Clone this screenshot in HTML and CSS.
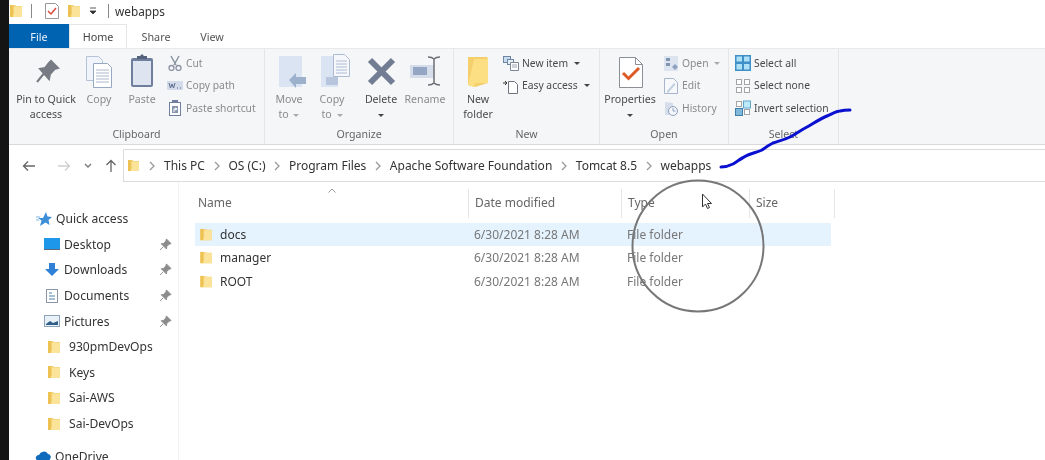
FILE: index.html
```html
<!DOCTYPE html>
<html lang="en">
<head>
<meta charset="utf-8">
<title>webapps</title>
<link rel="stylesheet" href="styles.css">
</head>
<body>
<svg class="defs" width="0" height="0" aria-hidden="true">
  <symbol id="folder" viewBox="0 0 12 16">
    <path d="M0 2h5l1 1h6v11H0z" fill="#f2cf6f"/>
    <path d="M4 3.5h8V14H2l2-3z" fill="#fbe39a"/>
    <path d="M0 2h3v12H0z" fill="#edc253"/>
  </symbol>
  <symbol id="pin" viewBox="0 0 14 14">
    <path d="M8 1l5 5-2 .6-2.6 2.6-.4 2.6L2.400 6.200 5 5.800 7.400 3.200zM4.500 9.500L1 13" fill="#8c8c8c" stroke="#8c8c8c"/>
  </symbol>
  <symbol id="chev" viewBox="0 0 6 10">
    <path d="M1 1l4 4-4 4" fill="none" stroke="#9a9a9a" stroke-width="1.300"/>
  </symbol>
</svg>
<div class="app">
  <div class="edge"></div>
  <div class="window">
    <header class="titlebar">
      <svg class="tb-folder"><use href="#folder"/></svg>
      <span class="tb-sep"></span>
      <svg class="tb-check" viewBox="0 0 14 16"><path d="M.500.500h10l3 3v12H.500z" fill="#fff" stroke="#999"/><path d="M3 8l3 3 5-6" fill="none" stroke="#d9483b" stroke-width="1.500"/></svg>
      <svg class="tb-folder2"><use href="#folder"/></svg>
      <svg class="tb-caret" viewBox="0 0 8 8"><path d="M1 1h6M1 4h6l-3 3z" fill="#333" stroke="#333" stroke-width=".8"/></svg>
      <span class="tb-sep tb-sep2"></span>
      <span class="tb-title">webapps</span>
    </header>
    <nav class="tabs">
      <span class="tab tab-file">File</span>
      <span class="tab tab-home">Home</span>
      <span class="tab tab-share">Share</span>
      <span class="tab tab-view">View</span>
    </nav>
    <section class="ribbon">
      <div class="group g-clip">
        <div class="cells">
          <div class="big on">
            <svg class="ico" viewBox="0 0 36 36"><path d="M23 8l7 7-3.500 1-4.500 5-1 5L12 16l5-1 4-5zM15.500 21L9 29" fill="#777b84" stroke="#777b84" stroke-width="2"/></svg>
            <span>Pin to Quick<br>access</span>
          </div>
          <div class="big">
            <svg class="ico" viewBox="0 0 36 36"><path d="M5.500 3.500h12l4 4v20h-16z" fill="#f1f4fa" stroke="#b5c3d9"/><path d="M12.500 10.500h14l4 4v20h-18z" fill="#fff" stroke="#97a8c3"/><path d="M15 17h13M15 20h13M15 23h13M15 26h13M15 29h13" stroke="#aab8cd"/></svg>
            <span>Copy</span>
          </div>
          <div class="big">
            <svg class="ico" viewBox="0 0 36 36"><rect x="7" y="5" width="22" height="29" rx="2" fill="#6f7f9d"/><rect x="9" y="8" width="18" height="24" fill="#dfe5f0"/><path d="M13 6h10V3h-3l-2-2-2 2h-3z" fill="#54627c"/></svg>
            <span>Paste</span>
          </div>
          <div class="smalls">
            <div class="small"><svg viewBox="0 0 16 16"><path d="M4 1l5 9M12 1l-5 9" stroke="#8b93a3" stroke-width="1.500" fill="none"/><circle cx="4.500" cy="13" r="2.500" fill="none" stroke="#8b93a3" stroke-width="1.300"/><circle cx="11.500" cy="13" r="2.500" fill="none" stroke="#8b93a3" stroke-width="1.300"/></svg><span>Cut</span></div>
            <div class="small"><svg viewBox="0 0 16 16"><rect y="3" width="16" height="9" fill="#d4dcec"/><path d="M2 5l1.500 5L5 6l1.500 4L8 5M10 10h1M13 10h1" fill="none" stroke="#58698a"/></svg><span>Copy path</span></div>
            <div class="small"><svg viewBox="0 0 16 16"><rect x="2.500" y="2.500" width="11" height="13" fill="#fff" stroke="#6f7f9d"/><rect x="5" y="0" width="6" height="3" fill="#6f7f9d"/><path d="M5 6h6v7H5z" fill="#8896ae"/><path d="M7 12V9h3M8 8l2 1-2 1" fill="none" stroke="#fff"/></svg><span>Paste shortcut</span></div>
          </div>
        </div>
        <div class="glabel">Clipboard</div>
      </div>
      <div class="group g-org">
        <div class="cells">
          <div class="big">
            <svg class="ico" viewBox="0 0 36 36"><rect x="8" y="3" width="23" height="31" fill="#dbe4f2"/><path d="M18 27l7-7v4h10v7H25v4z" fill="#9db0cc"/></svg>
            <span>Move<br>to <i class="car"></i></span>
          </div>
          <div class="big">
            <svg class="ico" viewBox="0 0 36 36"><rect x="7" y="3" width="17" height="31" fill="#dbe4f2"/><path d="M19.500 1.500h11l5 5v17h-16z" fill="#f5f7fb" stroke="#aebcd3"/><path d="M22 8h11M22 11h11M22 14h11M22 17h11M22 20h11" stroke="#aebcd3"/><rect x="12" y="24" width="12" height="8" fill="#b7c6dc"/></svg>
            <span>Copy<br>to <i class="car"></i></span>
          </div>
          <div class="big on">
            <svg class="ico" viewBox="0 0 36 36"><path d="M7 7l23 23M30 7L7 30" stroke="#727c92" stroke-width="6"/></svg>
            <span>Delete<br><i class="car dark"></i></span>
          </div>
          <div class="big">
            <svg class="ico" viewBox="0 0 36 36"><rect x="3" y="12" width="24" height="13" fill="#d5ddeb"/><rect x="6" y="14" width="14" height="8" fill="#94a6c4"/><path d="M21 4c3 0 5 1 6 2 1-1 3-2 6-2M27 6v24M21 32c3 0 5-1 6-2 1 1 3 2 6 2" fill="none" stroke="#6c6f76" stroke-width="1.500"/></svg>
            <span>Rename</span>
          </div>
        </div>
        <div class="glabel">Organize</div>
      </div>
      <div class="group g-new">
        <div class="cells">
          <div class="big on">
            <svg class="ico" viewBox="0 0 36 36"><path d="M8 4h19l1 2v24l-13 4-7-2z" fill="#f4cf6b"/><path d="M14 6h14v24H15l-1 4-6-2z" fill="#fcdf83"/></svg>
            <span>New<br>folder</span>
          </div>
          <div class="smalls">
            <div class="small on"><svg viewBox="0 0 16 16"><rect x=".5" y="1.500" width="7" height="6" fill="#c9dcef" stroke="#6d86a4"/><rect x="4.500" y="4.500" width="6" height="5" fill="#e6eef7" stroke="#6d86a4"/><path d="M7.500 7.500h8v8h-8z" fill="#fff" stroke="#7d8694"/><path d="M9 10h5M9 12h5" stroke="#9aa3b2"/></svg><span>New item</span><i class="car dark"></i></div>
            <div class="small on"><svg viewBox="0 0 16 16"><path d="M5.500 3.500h6l3 3v9h-9z" fill="#fff" stroke="#6e7280"/><path d="M0 5h4M2 3l2 2-2 2" fill="none" stroke="#333"/></svg><span>Easy access</span><i class="car dark"></i></div>
          </div>
        </div>
        <div class="glabel">New</div>
      </div>
      <div class="group g-open">
        <div class="cells">
          <div class="big on">
            <svg class="ico" viewBox="0 0 36 36"><path d="M7.500 4.500h16l7 7v23h-23z" fill="#fff" stroke="#8c8f96"/><path d="M23.500 4.500v7h7" fill="none" stroke="#8c8f96"/><path d="M11 20l5.500 5.500L27 15" fill="none" stroke="#dd5a27" stroke-width="3"/></svg>
            <span>Properties<br><i class="car dark"></i></span>
          </div>
          <div class="smalls">
            <div class="small"><svg viewBox="0 0 16 16"><rect x="1" y="1" width="14" height="15" fill="#dce4f0"/><rect x="3" y="3" width="4" height="3" fill="#7f93b3"/><rect x="3" y="8" width="4" height="3" fill="#7f93b3"/><path d="M9 12l3-3 3 3-3 3z" fill="#8da0bd"/></svg><span>Open</span><i class="car"></i></div>
            <div class="small"><svg viewBox="0 0 16 16"><path d="M1.500 .5h9l4 4v11h-13z" fill="#f6f8fb" stroke="#a7b5ca"/><path d="M4 13l7-8 1.500 1.500-7 8H4z" fill="#c2cfe0"/></svg><span>Edit</span></div>
            <div class="small"><svg viewBox="0 0 16 16"><path d="M2 2l8 1v12H2z" fill="#d6ddea"/><circle cx="10" cy="11" r="4.500" fill="#f4f6fa" stroke="#8da0bd"/><path d="M10 8v3h2.500" fill="none" stroke="#8da0bd"/></svg><span>History</span></div>
          </div>
        </div>
        <div class="glabel">Open</div>
      </div>
      <div class="group g-sel">
        <div class="cells">
          <div class="smalls">
            <div class="small on"><svg viewBox="0 0 16 16"><rect width="16" height="16" fill="#3f8fc9"/><rect x="1.500" y="1.500" width="5.500" height="5" fill="#aee0f7"/><rect x="9" y="1.500" width="5.500" height="5" fill="#aee0f7"/><rect x="1.500" y="9" width="5.500" height="5.500" fill="#aee0f7"/><rect x="9" y="9" width="5.500" height="5.500" fill="#aee0f7"/></svg><span>Select all</span></div>
            <div class="small on"><svg viewBox="0 0 16 16"><g fill="#fff" stroke="#a5a5a5"><rect x="1.500" y="1.500" width="5" height="5"/><rect x="9.500" y="1.500" width="5" height="5"/><rect x="1.500" y="9.500" width="5" height="5"/><rect x="9.500" y="9.500" width="5" height="5"/></g></svg><span>Select none</span></div>
            <div class="small on"><svg viewBox="0 0 16 16"><rect x="1.500" y="1.500" width="5" height="5" fill="#fff" stroke="#a5a5a5"/><rect x="8.500" y="1" width="7" height="7" fill="#bdeaf8" stroke="#5fa6cf"/><rect x=".5" y="8.500" width="7" height="7" fill="#7fb9dc" stroke="#3f7fa8"/><rect x="9.500" y="9.500" width="5" height="5" fill="#fff" stroke="#a5a5a5"/></svg><span>Invert selection</span></div>
          </div>
        </div>
        <div class="glabel">Select</div>
      </div>
    </section>
    <section class="addr">
      <div class="arrows">
        <svg class="a-back" viewBox="0 0 14 12"><path d="M13 6H1.500M6 1.500L1.500 6 6 10.500" fill="none" stroke="#666" stroke-width="1.300"/></svg>
        <svg class="a-fwd" viewBox="0 0 14 12"><path d="M1 6h11.500M8 1.500L12.500 6 8 10.500" fill="none" stroke="#cfcfcf" stroke-width="1.300"/></svg>
        <svg class="a-down" viewBox="0 0 8 6"><path d="M1 1l3 3 3-3" fill="none" stroke="#777" stroke-width="1.300"/></svg>
        <svg class="a-up" viewBox="0 0 12 14"><path d="M6 13V1.500M1.500 6L6 1.500 10.500 6" fill="none" stroke="#666" stroke-width="1.300"/></svg>
      </div>
      <div class="crumbs">
        <svg class="c-folder"><use href="#folder"/></svg>
        <svg class="chev"><use href="#chev"/></svg><span>This PC</span>
        <svg class="chev"><use href="#chev"/></svg><span>OS (C:)</span>
        <svg class="chev"><use href="#chev"/></svg><span>Program Files</span>
        <svg class="chev"><use href="#chev"/></svg><span>Apache Software Foundation</span>
        <svg class="chev"><use href="#chev"/></svg><span>Tomcat 8.5</span>
        <svg class="chev"><use href="#chev"/></svg><span>webapps</span>
      </div>
    </section>
    <main class="body">
      <aside class="nav">
        <div class="nitem head"><svg viewBox="0 0 16 16"><path d="M10 1l1.500 4.500L16 6l-3.500 3 1 5-4-2.500L4 15l1.500-5.500L2 7l5 0z" fill="#3d8fd8"/><path d="M0 6h4M0 9h3" stroke="#7fb6e6"/></svg><span>Quick access</span></div>
        <div class="nitem"><svg viewBox="0 0 16 16"><rect y="2" width="16" height="11" fill="#1c97ea"/><rect y="13" width="16" height="1" fill="#5c6a78"/></svg><span>Desktop</span><svg class="npin"><use href="#pin"/></svg></div>
        <div class="nitem"><svg viewBox="0 0 16 16"><path d="M5 1h6v6h4l-7 7-7-7h4z" fill="#2f80d6"/></svg><span>Downloads</span><svg class="npin"><use href="#pin"/></svg></div>
        <div class="nitem"><svg viewBox="0 0 16 16"><rect x="2.500" y="1.500" width="11" height="13" fill="#fff" stroke="#8a95a5"/><path d="M5 5h3M5 8h6M5 11h6" stroke="#4f7ea8"/></svg><span>Documents</span><svg class="npin"><use href="#pin"/></svg></div>
        <div class="nitem"><svg viewBox="0 0 16 16"><rect x=".5" y="2.500" width="15" height="11" fill="#e8f1f8" stroke="#8fa3b8"/><path d="M2 11l4-3 3 2 5-2v4H2z" fill="#2f5f8a"/></svg><span>Pictures</span><svg class="npin"><use href="#pin"/></svg></div>
        <div class="nitem"><svg class="nfolder"><use href="#folder"/></svg><span>930pmDevOps</span></div>
        <div class="nitem"><svg class="nfolder"><use href="#folder"/></svg><span>Keys</span></div>
        <div class="nitem"><svg class="nfolder"><use href="#folder"/></svg><span>Sai-AWS</span></div>
        <div class="nitem"><svg class="nfolder"><use href="#folder"/></svg><span>Sai-DevOps</span></div>
        <div class="nitem head cloud"><svg viewBox="0 0 16 16"><path d="M1 11a3 3 0 013-4 5 5 0 019-1 3 3 0 012 5l-1 3H3z" fill="#0f6cbd"/></svg><span>OneDrive</span></div>
      </aside>
      <div class="list">
        <div class="lhead">
          <div class="col c1">Name<svg class="sort" viewBox="0 0 8 5"><path d="M.5 4.500L4 1l3.500 3.500" fill="none" stroke="#999"/></svg></div>
          <div class="col c2">Date modified</div>
          <div class="col c3">Type</div>
          <div class="col c4">Size</div>
        </div>
        <div class="row sel"><div class="c1 fname"><svg class="rfolder"><use href="#folder"/></svg>docs</div><div class="c2 dim">6/30/2021 8:28 AM</div><div class="c3 dim">File folder</div></div>
        <div class="row"><div class="c1 fname"><svg class="rfolder"><use href="#folder"/></svg>manager</div><div class="c2 dim">6/30/2021 8:28 AM</div><div class="c3 dim">File folder</div></div>
        <div class="row"><div class="c1 fname"><svg class="rfolder"><use href="#folder"/></svg>ROOT</div><div class="c2 dim">6/30/2021 8:28 AM</div><div class="c3 dim">File folder</div></div>
      </div>
    </main>
  </div>
</div>
<svg class="annot" viewBox="0 0 1045 460" aria-hidden="true">
  <path d="M721 167c5 0 8-1 12-3 5-3 10-7 15-9 5-2 10-3 14-5 4-3 7-5 11-7 6-2 11-3 17-6 6-3 11-7 17-10 7-4 13-8 20-11 5-2 9-5 13-5 4-1 7-1 10-1" fill="none" stroke="#0a10cf" stroke-width="3" stroke-linecap="round"/>
  <circle cx="698" cy="246" r="65.500" fill="none" stroke="#777" stroke-width="2"/>
  <path d="M702.500 194v13l3-3 2 4.500 2-1-2-4h4z" fill="#fff" stroke="#333" stroke-width="1"/>
</svg>
</body>
</html>
```
FILE: styles.css
```css
* { box-sizing: border-box; }
html, body { margin: 0; height: 100%; overflow: hidden; background: #fff; }
body { position: relative; width: 1045px; height: 460px; font: 12px/15px "Noto Sans", "Open Sans", sans-serif; color: #444; }
.defs { position: absolute; }
svg { display: block; flex: none; }
.app { display: flex; height: 460px; filter: blur(.3px); }
.edge { width: 9px; background: #141414; }
.window { flex: 1; min-width: 0; display: flex; flex-direction: column; background: #fff; }

.titlebar { height: 24px; display: flex; align-items: center; background: #fff; color: #333; padding-bottom: 2px; }
.tb-folder { width: 12px; height: 16px; margin-left: 1px; }
.tb-sep { width: 1px; height: 14px; background: #888; margin-left: 9px; }
.tb-check { width: 14px; height: 16px; margin-left: 13px; }
.tb-folder2 { width: 12px; height: 16px; margin-left: 9px; }
.tb-caret { width: 8px; height: 8px; margin-left: 9px; }
.tb-sep2 { margin-left: 11px; }
.tb-title { margin-left: 6px; font-size: 11.800px; }

.tabs { height: 24px; display: flex; font-size: 10.800px; }
.tab { display: flex; align-items: center; justify-content: center; color: #555; }
.tab-file { width: 60px; background: #0063b1; color: #e8f1fa; }
.tab-home { width: 58px; background: #fff; color: #444; border: 1px solid #e6e6e6; border-bottom: 0; }
.tab-share { width: 58px; }
.tab-view { width: 54px; }

.ribbon { height: 97px; display: flex; background: #f5f6f7; border-top: 1px solid #e9e9ea; border-bottom: 1px solid #d9d9d9; }
.group { display: flex; flex-direction: column; border-right: 1px solid #e4e5e7; padding-top: 4px; }
.cells { flex: 1; display: grid; min-height: 0; }
.glabel { height: 17px; text-align: center; color: #666; font-size: 10.600px; line-height: 15px; }
.big { display: flex; flex-direction: column; align-items: center; color: #8b8b8b; font-size: 10.600px; line-height: 15px; text-align: center; white-space: nowrap; }
.big.on { color: #4a4a4a; }
.ico { width: 36px; height: 36px; margin-bottom: 3px; }
.smalls { display: flex; flex-direction: column; gap: 6.500px; padding-top: 2px; }
.small { height: 16px; display: flex; align-items: center; gap: 3px; color: #8b8b8b; font-size: 10.300px; white-space: nowrap; }
.small.on { color: #4a4a4a; }
.small > svg { width: 16px; height: 16px; }
.car { display: inline-block; width: 0; height: 0; border: 3px solid transparent; border-top-color: #aaa; border-bottom: 0; vertical-align: middle; margin-left: 2px; }
.car.dark { border-top-color: #444; margin-left: 3px; }
.big .car.dark { margin-left: 0; }

.g-clip { width: 256px; }
.g-clip .cells { grid-template-columns: 60px 46px 40px auto; padding-left: 7px; }
.g-clip .smalls { margin-left: 5px; }
.g-org { width: 189px; }
.g-org .cells { grid-template-columns: 40px 46px 52px 36px; padding-left: 4px; }
.g-new { width: 146px; }
.g-new .cells { grid-template-columns: 40px auto; gap: 5px; padding-left: 4px; }
.g-open { width: 129px; }
.g-open .cells { grid-template-columns: 52px auto; gap: 7px; padding-left: 4px; }
.g-sel { width: 110px; }
.g-sel .cells { padding-left: 6px; }

.addr { height: 37px; display: flex; padding-top: 4px; }
.arrows { width: 114px; display: flex; align-items: center; }
.a-back { width: 14px; height: 12px; margin-left: 13px; }
.a-fwd { width: 14px; height: 12px; margin-left: 21px; }
.a-down { width: 8px; height: 6px; margin-left: 13px; }
.a-up { width: 12px; height: 14px; margin-left: 13px; }
.crumbs { flex: 1; display: flex; align-items: center; border: 1px solid #dcdcdc; border-right: 0; padding-left: 4px; color: #333; font-size: 12px; }
.c-folder { width: 11px; height: 15px; }
.chev { width: 6px; height: 10px; margin: 0 8.750px; }
.c-folder + .chev { margin-left: 10px; margin-right: 9px; }

.body { flex: 1; display: flex; min-height: 0; }
.nav { width: 170px; padding-top: 24px; border-right: 1px solid #f3f3f3; overflow: hidden; flex: none; }
.nitem { height: 25.600px; display: flex; align-items: center; gap: 4px; padding-left: 35px; color: #333; font-size: 12.100px; position: relative; }
.nitem > svg:first-child { width: 16px; height: 16px; }
.nitem.head { padding-left: 27px; gap: 4px; }
.nitem.head.cloud { margin-top: 7px; padding-left: 26px; }
.nitem > .nfolder { width: 11px; height: 15px; margin: 0 3px 0 2px; }
.npin { width: 13px; height: 13px; margin-left: auto; margin-right: 6px; }

.list { flex: 1; min-width: 0; padding: 7px 0 0 16px; }
.lhead, .row { display: grid; grid-template-columns: 273px 153px 128px 85px; width: 640px; }
.lhead { height: 29px; margin-bottom: 5px; margin-left: 1px; color: #666; }
.col { display: flex; align-items: center; padding: 0 0 2px 6px; border-right: 1px solid #e5e5e5; margin: 0; position: relative; }
.c1.col { padding-left: 2px; }
.sort { position: absolute; width: 8px; height: 5px; left: 132px; top: -1px; }
.row { height: 23.300px; align-items: center; color: #444; }
.row > div { padding-left: 6px; }
.row .c2 { padding-left: 6px; }
.row .c3 { padding-left: 6px; }
.row.sel { background: #e5f3ff; width: 636px; }
.fname { display: flex; align-items: center; color: #333; gap: 8px; }
.row > .fname { padding-left: 5px; }
.rfolder { width: 12px; height: 15px; }
.dim { color: #777; }

.annot { position: absolute; left: 0; top: 0; width: 1045px; height: 460px; pointer-events: none; }
```
